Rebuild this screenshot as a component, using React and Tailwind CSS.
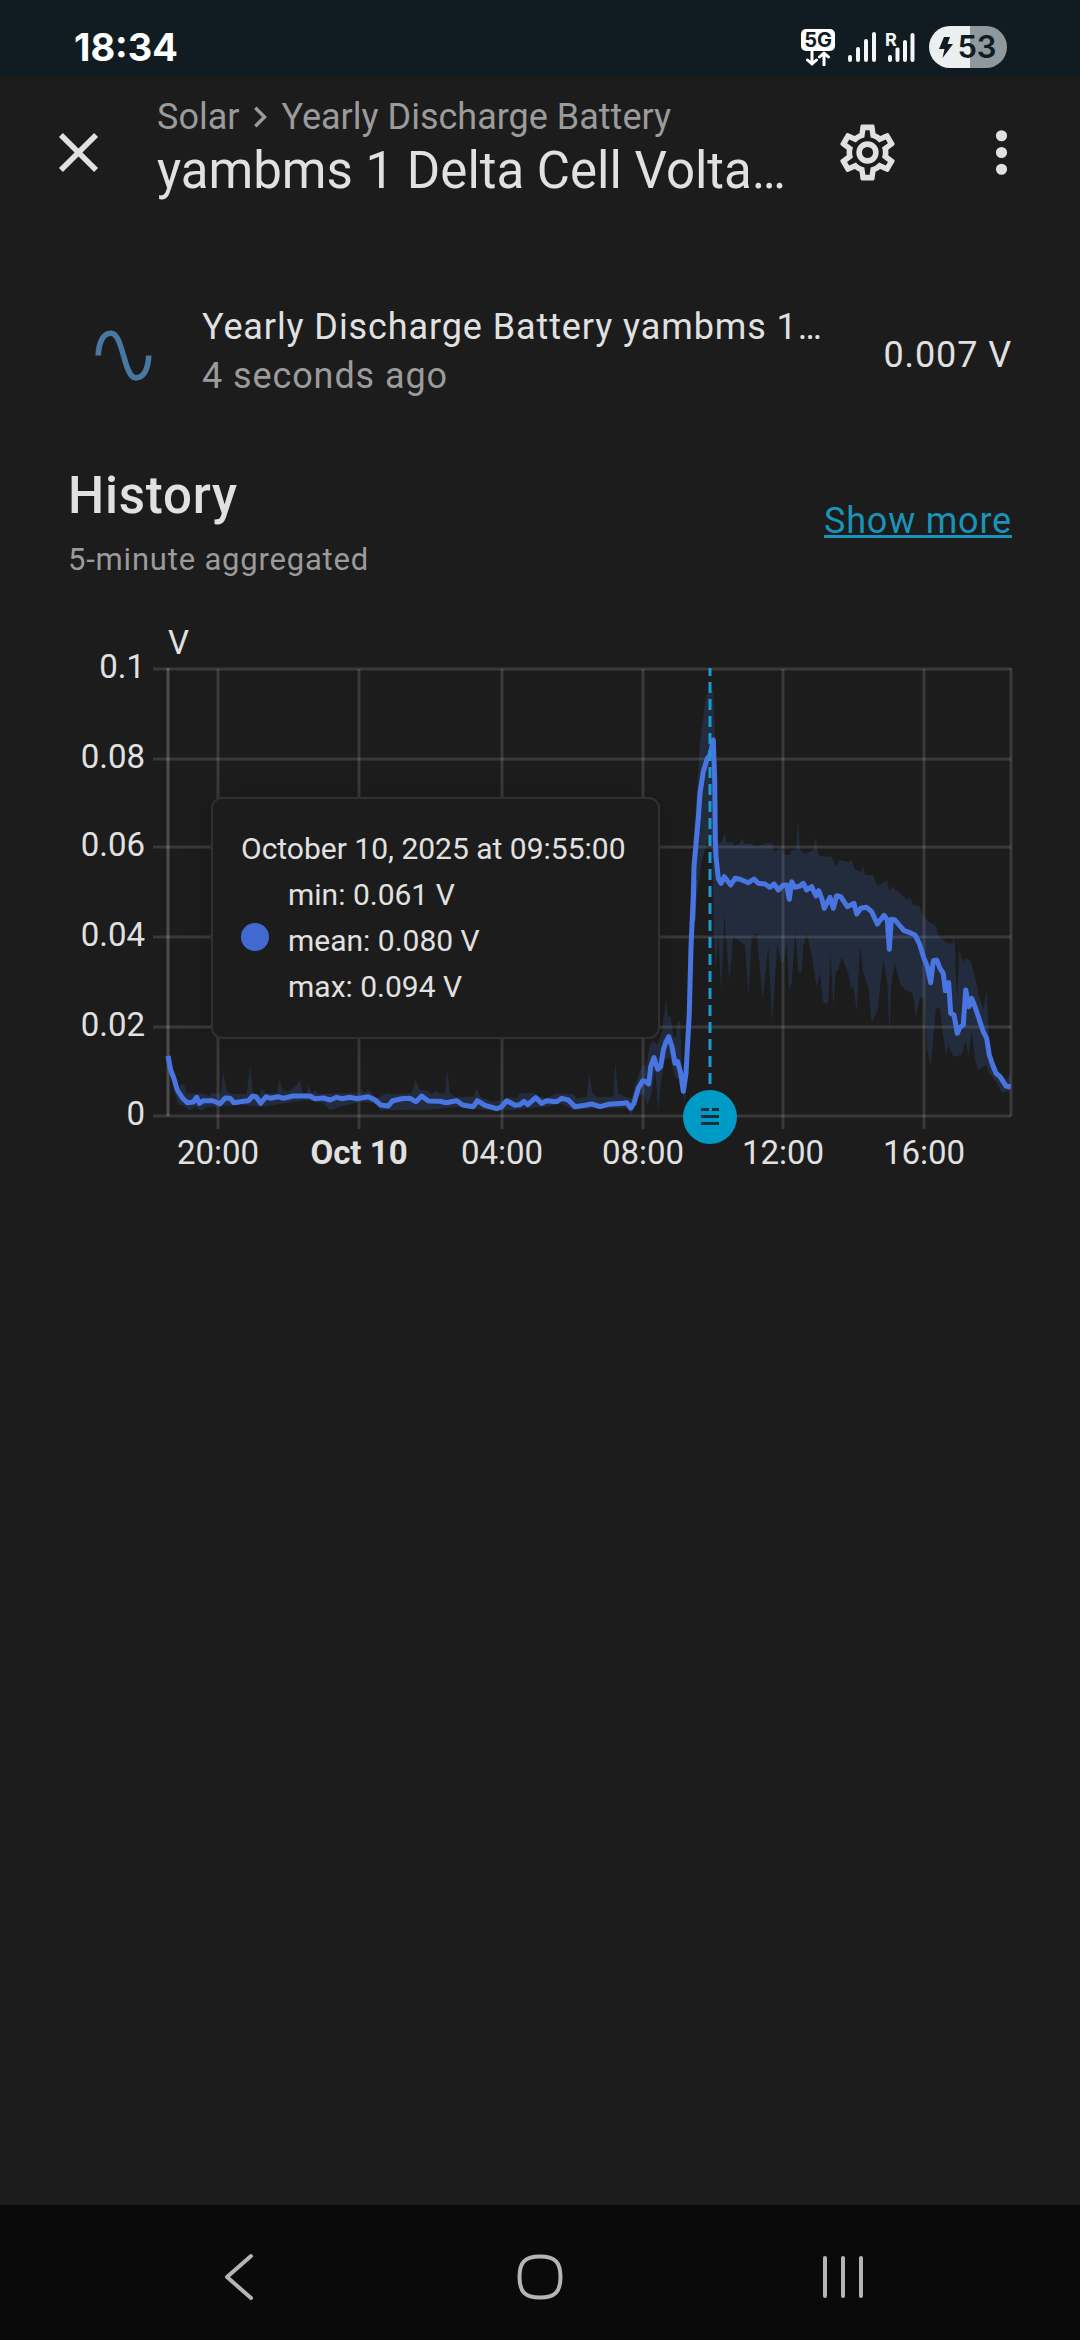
import React from "react";

const PATHS = {
  close:
    "M19,6.41L17.59,5L12,10.59L6.41,5L5,6.41L10.59,12L5,17.59L6.41,19L12,13.41L17.59,19L19,17.59L13.41,12L19,6.41Z",
  cog: "M12,8A4,4 0 0,1 16,12A4,4 0 0,1 12,16A4,4 0 0,1 8,12A4,4 0 0,1 12,8M12,10A2,2 0 0,0 10,12A2,2 0 0,0 12,14A2,2 0 0,0 14,12A2,2 0 0,0 12,10M10,22C9.75,22 9.54,21.82 9.5,21.58L9.13,18.93C8.5,18.68 7.96,18.34 7.44,17.94L4.95,18.95C4.73,19.03 4.46,18.95 4.34,18.73L2.34,15.27C2.21,15.05 2.27,14.78 2.46,14.63L4.57,12.97L4.5,12L4.57,11L2.46,9.37C2.27,9.22 2.21,8.95 2.34,8.73L4.34,5.27C4.46,5.05 4.73,4.96 4.95,5.05L7.44,6.05C7.96,5.66 8.5,5.32 9.13,5.07L9.5,2.42C9.54,2.18 9.75,2 10,2H14C14.25,2 14.46,2.18 14.5,2.42L14.87,5.07C15.5,5.32 16.04,5.66 16.56,6.05L19.05,5.05C19.27,4.96 19.54,5.05 19.66,5.27L21.66,8.73C21.79,8.95 21.73,9.22 21.54,9.37L19.43,11L19.5,12L19.43,13L21.54,14.63C21.73,14.78 21.79,15.05 21.66,15.27L19.66,18.73C19.54,18.95 19.27,19.04 19.05,18.95L16.56,17.95C16.04,18.34 15.5,18.68 14.87,18.93L14.5,21.58C14.46,21.82 14.25,22 14,22H10M11.25,4L10.88,6.61C9.68,6.86 8.62,7.5 7.85,8.39L5.44,7.35L4.69,8.65L6.8,10.2C6.4,11.37 6.4,12.64 6.8,13.8L4.68,15.36L5.43,16.66L7.86,15.62C8.63,16.5 9.68,17.14 10.87,17.38L11.24,20H12.76L13.13,17.39C14.32,17.14 15.37,16.5 16.14,15.62L18.57,16.66L19.32,15.36L17.2,13.81C17.6,12.64 17.6,11.37 17.2,10.2L19.31,8.65L18.56,7.35L16.15,8.39C15.38,7.5 14.32,6.86 13.12,6.62L12.75,4H11.25Z",
  dots: "M12,16A2,2 0 0,1 14,18A2,2 0 0,1 12,20A2,2 0 0,1 10,18A2,2 0 0,1 12,16M12,10A2,2 0 0,1 14,12A2,2 0 0,1 12,14A2,2 0 0,1 10,12A2,2 0 0,1 12,10M12,4A2,2 0 0,1 14,6A2,2 0 0,1 12,8A2,2 0 0,1 10,6A2,2 0 0,1 12,4Z",
  chevron: "M8.59,16.58L13.17,12L8.59,7.41L10,6L16,12L10,18L8.59,16.58Z",
  sine: "M16.5,21C13.5,21 12.31,16.76 11.05,12.28C10.14,9.04 9,5 7.5,5C4.11,5 4,11.93 4,12H2C2,11.63 2.06,3 7.5,3C10.5,3 11.71,7.25 12.97,11.74C13.83,14.8 15,19 16.5,19C19.94,19 20.03,12.07 20.03,12H22.03C22.03,12.37 21.97,21 16.5,21Z",
};

function Icon({ name, className }) {
  return (
    <svg viewBox="0 0 24 24" fill="currentColor" aria-hidden="true" className={className}>
      <path d={PATHS[name]} />
    </svg>
  );
}

function SignalBars({ roaming }) {
  return (
    <svg viewBox="0 0 30 30" aria-hidden="true" className="h-[30px] w-[30px] overflow-visible" stroke="#f4f6f7" strokeWidth="4" strokeLinecap="round">
      <path d="M3 25V28M11 17V28M19 9V28M27 2V28" stroke={roaming ? "none" : undefined} />
      {roaming && <path d="M5 25V28M12.500 17V28M20 10V28M27.500 3V28" />}
      {roaming && (
        <text x="0" y="14" fontSize="18" fontWeight="700" fill="#f4f6f7" stroke="#111c22" strokeWidth="3" paintOrder="stroke" className="font-['Inter',sans-serif]">
          R
        </text>
      )}
    </svg>
  );
}

function StatusBar() {
  return (
    <div className="flex h-[76px] items-center justify-between bg-[#111c22] pr-[73px] pl-[74px] font-['Inter',sans-serif] text-white">
      <span className="mt-[18px] text-[38px] leading-[48px] font-bold">18:34</span>
      <div className="mt-[18px] flex items-center">
        <div className="flex flex-col items-center">
          <span className="rounded-[5px] bg-white px-[3px] text-[20px] leading-[22px] font-bold text-[#111c22]">5G</span>
          <svg viewBox="0 0 26 15" aria-hidden="true" className="h-[15px] w-[26px]" fill="none" stroke="#fff" strokeWidth="3" strokeLinecap="round" strokeLinejoin="round">
            <path d="M7 1V13M2.500 9L7 13L11.500 9M19 14V2M14.500 6L19 2L23.500 6" />
          </svg>
        </div>
        <div className="ml-3 flex items-center gap-2">
          <SignalBars />
          <SignalBars roaming />
        </div>
        <div className="ml-[14px] flex h-[42px] w-[78px] items-center justify-center gap-1 rounded-full bg-linear-to-r from-[#eceff0] from-53% to-[#8f989c] to-53% text-[#111c22]">
          <svg viewBox="0 0 14 21" aria-hidden="true" className="h-[21px] w-[14px]" fill="currentColor">
            <path d="M5 0H11L8.500 7H14L3.500 21L5.500 12H0Z" />
          </svg>
          <span className="text-[31px] leading-[42px] font-semibold">53</span>
        </div>
      </div>
    </div>
  );
}

function DialogHeader() {
  return (
    <header className="flex h-[152px] items-center px-[45px] text-[#e1e1e1]">
      <button type="button" aria-label="Close" className="shrink-0">
        <Icon name="close" className="size-[67px]" />
      </button>
      <div className="ml-[45px] min-w-0 flex-1 pb-[10px]">
        <div className="flex items-center text-[36px] leading-[48px] text-[#9b9b9b]">
          <span>Solar</span>
          <Icon name="chevron" className="size-[42px]" />
          <span>Yearly Discharge Battery</span>
        </div>
        <h1 className="truncate text-[51px] leading-[60px]">yambms 1 Delta Cell Volta…</h1>
      </div>
      <button type="button" aria-label="Settings" className="ml-[36px] shrink-0">
        <Icon name="cog" className="size-[67px]" />
      </button>
      <button type="button" aria-label="More options" className="ml-[67px] shrink-0">
        <Icon name="dots" className="size-[67px]" />
      </button>
    </header>
  );
}

function EntityRow() {
  return (
    <section className="mt-[75px] flex items-center px-[68px] text-[36px] leading-[49px] tracking-wide text-[#e1e1e1]">
      <Icon name="sine" className="mx-[22px] size-[67px] shrink-0 text-[#4877a0]" />
      <div className="ml-[23px] min-w-0 flex-1 pb-[6px]">
        <div className="truncate">Yearly Discharge Battery yambms 1…</div>
        <div className="text-[#9b9b9b]">4 seconds ago</div>
      </div>
      <span className="ml-[50px] shrink-0">0.007 V</span>
    </section>
  );
}

function HistoryHeader() {
  return (
    <div className="mt-[53px] flex items-center justify-between px-[68px] tracking-wider">
      <div>
        <h2 className="text-[51px] leading-[72px] font-medium text-[#e1e1e1]">History</h2>
        <p className="text-[31px] leading-[56px] text-[#9b9b9b]">5-minute aggregated</p>
      </div>
      <a href="#history" className="mb-[6px] text-[36px] leading-[48px] text-[#1a93b8] underline">
        Show more
      </a>
    </div>
  );
}

// Samples are kept per stretch of the time line, in thirds of a chart unit from the stretch's origin.
const stretch = (ox, oy, text) =>
  text.split(" ").map((pair) => {
    const [x, y] = pair.split(",").map(Number);
    return [ox + x / 3, oy + y / 3];
  });

const toPath = (points) => points.map(([x, y], i) => `${i ? "L" : "M"}${x.toFixed(1)} ${y.toFixed(1)}`).join("");

const MEAN = [
  ...stretch(40, 880, "384,528 392,570 402,596 412,630 428,655 442,668 460,666 470,652 478,670 490,662 518,662 540,671 556,654 570,655 582,668 610,664 625,662 638,648 648,650 662,670 678,650 690,655 715,650 730,655 760,648 810,648 825,656 850,654 870,660 890,652 905,656 930,652 950,656 985,650 1005,660 1022,675"),
  ...stretch(360, 880, "85,678 98,662 125,656 150,655 168,665 185,648 205,663 240,664 258,668 290,662 308,675 340,680 352,662 375,676 410,686 425,680 440,662 465,676 480,674 492,664 503,674 527,653 545,670 560,662 590,665 605,655 625,660 645,680 675,676 695,672 720,680 745,673 790,670 800,668 812,684 822,670 835,625 848,602 858,605 866,612 872,560 882,533 893,568 902,560 910,510 918,485 926,470 936,500 945,550 953,545 962,580 970,634 978,580 988,400 993,200 1002,0"),
  ...stretch(620, 640, "218,840 222,680 235,535 240,460 250,395 262,355 270,345 280,300 284,420 286,600 288,650 295,715 303,730 313,710 332,735 345,715 360,718 385,728 402,717 415,730 435,732 450,742 462,732 475,750 490,735 500,735 508,778 515,725 525,742 540,738 550,730 560,750 575,740 588,768 596,752 605,775"),
  ...stretch(820, 780, "13,385 30,352 40,385 50,347 62,350 82,380 102,370 110,402 122,385 140,382 155,395 172,432 192,406 202,420 208,508 214,418 225,420 252,452 270,458 285,465 298,490 312,535 322,560 332,608 340,542 350,540 360,565 370,580 376,632 386,608 392,700 402,705 412,760 420,742 430,735 437,630 447,680 455,655 465,680 480,725 490,755 500,775 508,825 518,855 528,880 540,890 558,918 572,921"),
];

const MAX = [
  ...stretch(40, 880, "384,520 400,590 415,635 422,615 432,612 440,640 500,642 505,650 515,640 543,640 550,575 560,635 575,642 620,642 630,555 638,640 660,645 665,625 675,640 712,640 718,598 728,630 745,635 765,620 780,600 788,640 800,640 806,615 815,640 825,630 835,642 900,640 960,640"),
  ...stretch(360, 880, "5,628 15,638 25,628 50,655 80,640 100,642 155,640 165,600 180,630 205,632 215,642 230,632 240,642 255,640 262,568 270,640 285,650 340,650 351,625 360,650 400,665 430,660 450,652 470,655 480,640 520,638 540,650 560,655 590,640 640,642 650,655 680,650 687,585 698,640 710,652 760,650 766,545 774,640 800,652 815,655 830,600 845,560 860,555 868,500 880,480 890,495 905,460 917,360 925,410 932,412 940,470 948,470 953,425 960,425 966,560 972,600 980,480 990,200"),
  ...stretch(620, 640, "215,840 220,600 232,440 240,310 250,230 258,165 280,150 286,300 292,610 306,605 313,580 322,610 335,605 345,618 360,610 366,595 375,612 390,610 410,620 440,610 455,610 465,635 480,625 495,645 510,645 515,630 528,630 534,540 540,630 555,640 570,635 580,630 587,592 595,640"),
  ...stretch(820, 780, "0,228 35,230 50,262 58,240 85,245 95,240 105,270 125,275 128,255 135,285 158,285 172,318 195,305 200,298 208,330 218,322 240,340 262,360 270,350 280,375 298,378 308,405 325,425 345,435 360,475 385,490 398,490 402,470 405,500 408,600 412,650 418,510 428,545 440,535 452,545 465,590 475,640 490,690 500,630 506,760 510,820 518,840 530,860 545,885 560,900 568,885 572,870"),
];

const MIN = [
  ...stretch(820, 960, "572,392 545,398 540,385 520,355 505,335 500,315 490,320 475,330 465,300 455,215 445,290 437,240 425,285 400,290 385,255 378,290 368,215 360,145 348,145 340,230 332,318 322,270 312,110 300,115 288,170 278,100 255,90 240,70 225,10 215,60 208,220 202,70 190,0 172,155 155,185 145,80 130,40 120,-40 110,155 100,75 95,90 85,40 65,-10 55,30 47,35 40,140 32,-20 25,130 10,130 0,40"),
  ...stretch(620, 900, "590,260 575,165 560,100 550,140 545,215 535,215 526,90 515,250 507,270 500,130 490,190 482,180 472,130 456,370 445,140 428,300 410,100 395,110 385,285 375,135 340,110 328,240 313,45 304,280 295,95 287,210 282,100 280,-20 275,-160 262,-170 245,-120 235,-40 222,80"),
  ...stretch(360, 880, "1000,200 990,480 975,670 960,600 945,590 930,530 915,540 905,590 895,690 885,570 875,640 862,675 850,640 835,650 815,705 800,685 700,685 640,690 600,670 560,680 500,685 460,690 400,692 300,680 200,690 140,690 60,690"),
  ...stretch(40, 880, "1010,670 960,665 900,680 870,690 850,670 800,660 700,675 660,680 600,675 540,680 500,680 485,692 465,680 450,692 430,675 415,675 400,620 384,540"),
];

const Y_TICKS = [
  ["0.1", 669],
  ["0.08", 759],
  ["0.06", 847],
  ["0.04", 937],
  ["0.02", 1027],
  ["0", 1116],
];

const X_TICKS = [
  ["20:00", 218],
  ["Oct 10", 359],
  ["04:00", 502],
  ["08:00", 643],
  ["12:00", 783],
  ["16:00", 924],
];

function HistoryChart() {
  return (
    <div className="relative mt-[22px]">
      <svg viewBox="0 610 1080 580" role="img" aria-label="Delta cell voltage history" className="w-full font-['Roboto',sans-serif] text-[33px]">
        <g stroke="#ffffff" strokeOpacity="0.13" strokeWidth="3">
          {Y_TICKS.map(([label, y]) => (
            <line key={label} x1="153" x2="1011" y1={y} y2={y} />
          ))}
          {X_TICKS.map(([label, x]) => (
            <line key={label} x1={x} x2={x} y1="669" y2="1129" />
          ))}
          <line x1="1011" x2="1011" y1="668" y2="1116" />
          <line x1="168" x2="168" y1="668" y2="1116" strokeOpacity="0.22" />
        </g>
        <path d={toPath([...MAX, ...MIN]) + "Z"} fill="#4a7ce0" fillOpacity="0.17" />
        <path d={toPath(MEAN)} fill="none" stroke="#4975e3" strokeWidth="5" strokeLinejoin="round" />
        <line x1="710" x2="710" y1="668" y2="1095" stroke="#1b9bd2" strokeWidth="3" strokeDasharray="11 6" strokeDashoffset="3" />
        <g fill="#e1e1e1">
          <text x="168" y="654">V</text>
          {Y_TICKS.map(([label, y]) => (
            <text key={label} x="145" y={y + 9} textAnchor="end">
              {label}
            </text>
          ))}
          {X_TICKS.map(([label, x]) => (
            <text key={label} x={x} y="1164" textAnchor="middle" fontWeight={label === "Oct 10" ? 700 : 400}>
              {label}
            </text>
          ))}
        </g>
      </svg>

      <div role="tooltip" className="absolute top-[187px] left-[211px] rounded-[11px] border-2 border-[#303030] bg-[#1c1c1c] py-[27px] pr-[32px] pl-[28px] text-[30px] leading-[46px] text-[#e1e1e1] shadow-[0_0_24px_rgba(0,0,0,0.15)]">
        <div>October 10, 2025 at 09:55:00</div>
        <div className="flex items-center gap-[19px]">
          <span className="mb-[8px] size-[28px] rounded-full bg-[#4269d0]" />
          <div>
            <div>min: 0.061 V</div>
            <div>mean: 0.080 V</div>
            <div>max: 0.094 V</div>
          </div>
        </div>
      </div>

      <button type="button" aria-label="Move time cursor" className="absolute top-[480px] left-[683px] grid size-[54px] place-items-center rounded-full bg-[#009ac7]">
        <svg viewBox="0 0 20 18" aria-hidden="true" className="h-[18px] w-[20px]" fill="#15303a">
          <path d="M1 0H9V3H1ZM12 0H19V3H12ZM1 7H19V10H1ZM1 14H19V17H1Z" />
        </svg>
      </button>
    </div>
  );
}

function NavigationBar() {
  return (
    <nav className="flex h-[135px] items-center justify-between bg-[#0a0a0a] px-[214px] pt-[9px] text-[#b5b5b5]">
      <button type="button" aria-label="Back">
        <svg viewBox="0 0 50 50" className="size-[50px]" fill="none" stroke="currentColor" strokeWidth="4" strokeLinecap="round" strokeLinejoin="round">
          <path d="M37 4L13 25L37 46" />
        </svg>
      </button>
      <button type="button" aria-label="Home">
        <svg viewBox="0 0 50 50" className="size-[50px]" fill="none" stroke="currentColor" strokeWidth="4">
          <path d="M25 4.500C40 4.500 45.500 10 45.500 25S40 45.500 25 45.500S4.500 40 4.500 25S10 4.500 25 4.500Z" />
        </svg>
      </button>
      <button type="button" aria-label="Recent apps">
        <svg viewBox="0 0 50 50" className="size-[50px]" fill="none" stroke="currentColor" strokeWidth="4" strokeLinecap="round">
          <path d="M9 6V44M27 6V44M45 6V44" />
        </svg>
      </button>
    </nav>
  );
}

export default function App() {
  return (
    <div className="flex min-h-screen flex-col bg-[#1c1c1c] font-['Roboto',sans-serif]">
      <StatusBar />
      <DialogHeader />
      <main className="flex-1">
        <EntityRow />
        <HistoryHeader />
        <HistoryChart />
      </main>
      <NavigationBar />
    </div>
  );
}
